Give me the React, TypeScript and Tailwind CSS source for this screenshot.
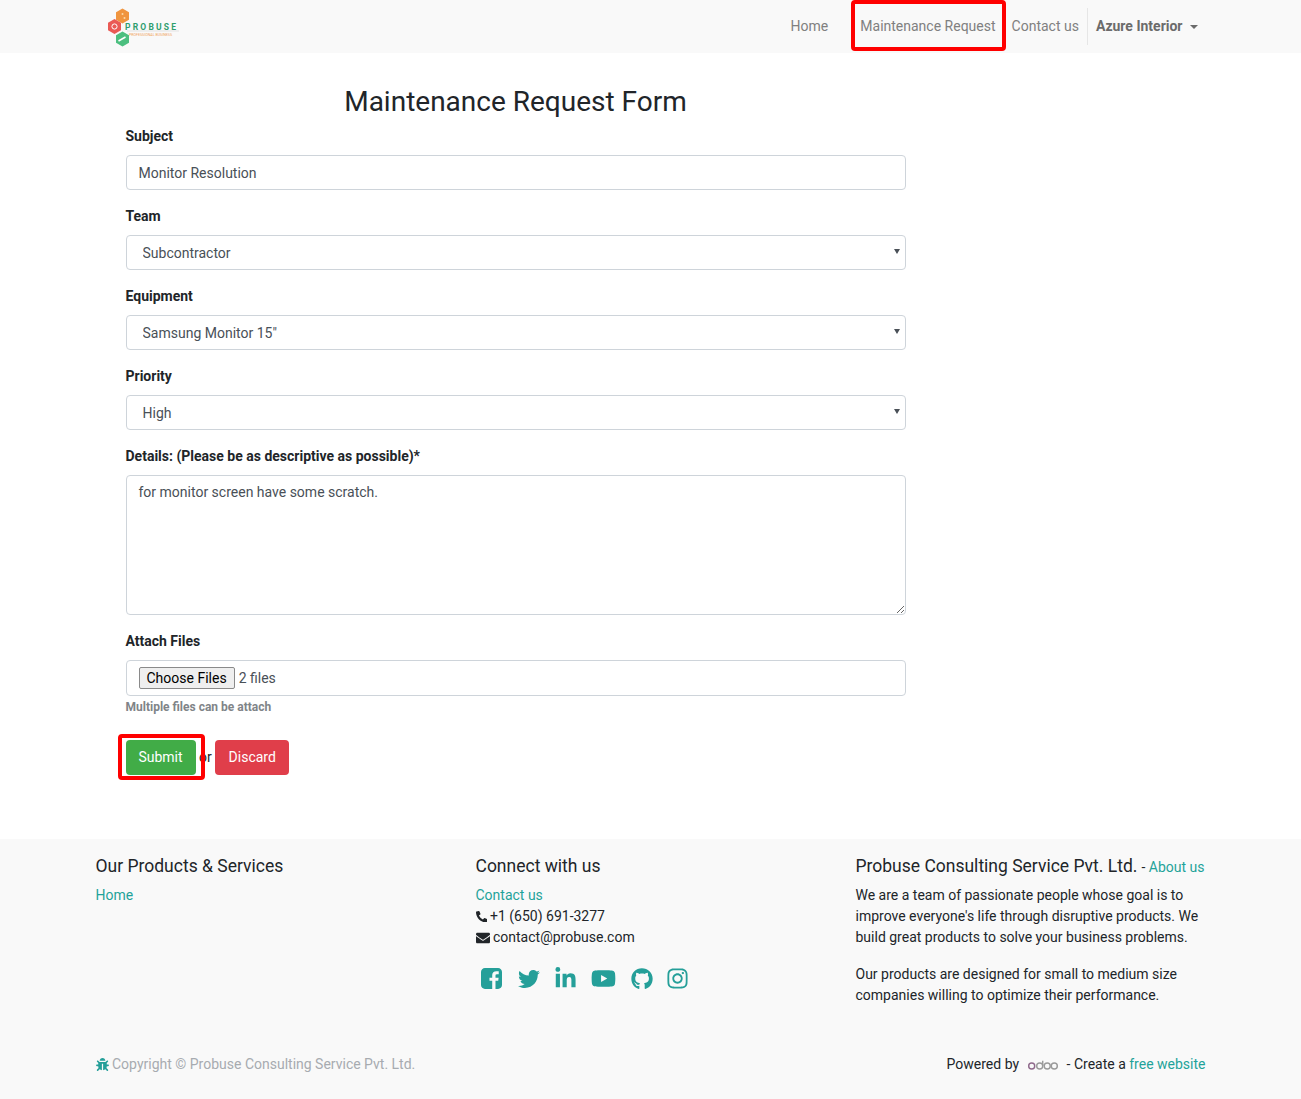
import { FaBug, FaEnvelope, FaGithub, FaInstagram, FaLinkedinIn, FaPhoneAlt, FaTwitter, FaYoutube } from "react-icons/fa";

function Logo() {
  return (
    <svg width="72" height="40" viewBox="0 0 72 40" className="block">
      <polygon points="14.5,1.5 21,5.2 21,12.8 14.5,16.5 8,12.8 8,5.2" fill="#f0953f" />
      <circle cx="14.5" cy="7" r="1" fill="#fbd9a8" />
      <circle cx="16.5" cy="11" r="1" fill="#fbd9a8" />
      <polygon points="6.5,12 13,15.7 13,23.3 6.5,27 0,23.3 0,15.7" fill="#ea5a55" />
      <circle cx="6.5" cy="19.5" r="2.6" fill="none" stroke="#fff" strokeWidth="1" />
      <polygon points="14.5,24.5 21,28.2 21,35.8 14.5,39.5 8,35.8 8,28.2" fill="#4cbf7f" />
      <path d="M10.5 34l7-4" stroke="#fff" strokeWidth="1.6" />
      <text x="17" y="22.5" fontFamily="Roboto" fontWeight="700" fontSize="8.5" letterSpacing="2.2" fill="#2f9e6e">PROBUSE</text>
      <path d="M19 24h52" stroke="#d8d8d8" strokeWidth="0.7" />
      <text x="21" y="28.5" fontFamily="Roboto" fontSize="3.6" fill="#f0a35e">PROFESSIONAL BUSINESS</text>
    </svg>
  );
}

function OdooLogo() {
  return (
    <svg width="32" height="12" viewBox="0 0 34 12" className="block">
      <circle cx="5" cy="7" r="3.2" fill="none" stroke="#8f6a8c" strokeWidth="1.5" />
      <circle cx="13.5" cy="7" r="3.2" fill="none" stroke="#9a9a9a" strokeWidth="1.5" />
      <path d="M16.7 1.5V7" stroke="#9a9a9a" strokeWidth="1.5" />
      <circle cx="21.5" cy="7" r="3.2" fill="none" stroke="#9a9a9a" strokeWidth="1.5" />
      <circle cx="29" cy="7" r="3.2" fill="none" stroke="#9a9a9a" strokeWidth="1.5" />
    </svg>
  );
}

// older font-awesome square, the f runs off the bottom edge
function FacebookSquare() {
  return (
    <svg width="21" height="21" viewBox="128 128 1536 1536" fill="currentColor" className="block">
      <path d="M1376 128q119 0 203.5 84.5t84.5 203.5v960q0 119-84.5 203.5t-203.5 84.5h-188v-595h199l30-232h-229v-148q0-56 23.5-84t91.5-28l122-1v-207q-63-9-178-9-136 0-217.5 80t-81.5 226v171h-200v232h200v595h-532q-119 0-203.5-84.5t-84.5-203.5v-960q0-119 84.5-203.5t203.5-84.5h960z" />
    </svg>
  );
}

const inputClass = "block w-full h-[35px] px-3 bg-white border border-[#ced4da] rounded text-sm text-[#495057] outline-none";

function SelectField({ label, value }: { label: string; value: string }) {
  return (
    <div className="mb-4">
      <label className="block mb-2 font-bold text-[#212529]">{label}</label>
      <div className="relative">
        <select defaultValue={value} className={`${inputClass} appearance-none pl-4`}>
          <option>{value}</option>
        </select>
        <span className="absolute right-[6px] top-[14px] border-x-[3px] border-x-transparent border-t-[5px] border-t-[#495057]" />
      </div>
    </div>
  );
}

export default function App() {
  return (
    <div className="min-h-[1099px] flex flex-col bg-white font-['Roboto',sans-serif] text-sm leading-[21px] text-[#212529]">
      {/* Navbar */}
      <header className="h-[53px] bg-[#f9f9f9]">
        <div className="w-[1140px] mx-auto pl-[27px] pr-[14.5px] h-full flex items-center justify-between">
          <Logo />
          <nav className="flex items-center text-[#808080]">
            <a className="px-2 mr-[16px]">Home</a>
            <a className="relative px-2">
              Maintenance Request
              <span className="absolute left-[-1px] right-[-2px] top-[-16px] bottom-[-14px] border-4 border-[#f00] rounded-sm" />
            </a>
            <a className="px-2">Contact us</a>
            <div className="flex items-center h-[37px] border-l border-[#e6e6e6] pl-2 pr-2 font-bold text-[#6b6b6b]">
              Azure Interior
              <span className="ml-[7.5px] border-x-[4.5px] border-x-transparent border-t-[4.5px] border-t-[#6b6b6b]" />
            </div>
          </nav>
        </div>
      </header>

      {/* Form */}
      <main className="w-[1140px] mx-auto flex-1 pl-[45px]">
        <form className="w-[780px]">
          <h3 className="pt-[32px] mb-[5px] h-[68px] text-center text-[28px] leading-[34px] text-[#212529]">Maintenance Request Form</h3>
          <div className="mb-4">
            <label className="block mb-2 font-bold">Subject</label>
            <input readOnly value="Monitor Resolution" className={inputClass} />
          </div>
          <SelectField label="Team" value="Subcontractor" />
          <SelectField label="Equipment" value={'Samsung Monitor 15"'} />
          <SelectField label="Priority" value="High" />
          <div className="mb-4">
            <label className="block mb-2 font-bold">Details: (Please be as descriptive as possible)*</label>
            <textarea
              readOnly
              value="for monitor screen have some scratch."
              className="block w-full h-[140px] px-3 py-[6px] bg-white border border-[#ced4da] rounded text-sm leading-[21px] text-[#495057] outline-none"
            />
          </div>
          <div className="mb-[24px]">
            <label className="block mb-2 font-bold">Attach Files</label>
            <div className="flex items-center h-9 px-3 border border-[#ced4da] rounded text-[#495057]">
              <span className="h-[22px] px-[7px] flex items-center bg-[#efefef] border border-[#8a8a8a] rounded-[2px] text-black">Choose Files</span>
              <span className="ml-1">2 files</span>
            </div>
            <small className="block mt-[2px] text-xs leading-[18px] font-bold text-[#808488]">Multiple files can be attach</small>
          </div>
          <div className="flex items-center">
            <button type="button" className="relative h-[35px] w-[70px] bg-[#41ac47] rounded text-white">
              Submit
              <span className="absolute left-[-8px] top-[-6px] right-[-9px] bottom-[-5px] border-4 border-[#f00] rounded-sm" />
            </button>
            <span className="ml-[3.5px] mr-[3.5px]">or</span>
            <button type="button" className="h-[35px] w-[74px] bg-[#e03e4a] rounded text-white">Discard</button>
          </div>
        </form>
      </main>

      {/* Footer */}
      <footer className="h-[260px] bg-[#f9f9f9]">
        <div className="w-[1140px] mx-auto px-[15px]">
          <div className="grid grid-cols-[380px_380px_1fr] h-[205px] pt-4">
            <div>
              <h5 className="mb-2 text-[17.5px] leading-[22px]">Our Products &amp; Services</h5>
              <a className="text-[#1fa39a]">Home</a>
            </div>
            <div>
              <h5 className="mb-2 text-[17.5px] leading-[22px]">Connect with us</h5>
              <a className="block text-[#1fa39a]">Contact us</a>
              <div className="flex items-center gap-[3px]"><FaPhoneAlt className="size-[11.5px]" />+1 (650) 691-3277</div>
              <div className="flex items-center gap-[3.5px]"><FaEnvelope className="size-[14px]" />contact@probuse.com</div>
              <div className="flex items-center h-[25px] mt-[18px] ml-[5px] text-[#259f99]">
                <FacebookSquare />
                <FaTwitter className="size-[22px] ml-[16px]" />
                <FaLinkedinIn className="size-[23px] ml-[14.5px]" />
                <FaYoutube className="size-[25px] ml-[13.5px]" />
                <FaGithub className="size-[22px] ml-[15px]" />
                <FaInstagram className="size-[23px] ml-[13px]" />
              </div>
            </div>
            <div>
              <h5 className="flex items-baseline gap-1 mb-2 h-[22px] leading-[22px] whitespace-nowrap">
                <span className="text-[17.5px]">Probuse Consulting Service Pvt. Ltd.</span>
                <span>- <a className="text-[#1fa39a]">About us</a></span>
              </h5>
              <p className="mb-4">We are a team of passionate people whose goal is to improve everyone's life through disruptive products. We build great products to solve your business problems.</p>
              <p>Our products are designed for small to medium size companies willing to optimize their performance.</p>
            </div>
          </div>
          <div className="flex items-center justify-between pt-[10px]">
            <div className="flex items-center gap-[3.5px] text-[#a7abb0]">
              <FaBug className="size-[13px] text-[#259f99]" />
              Copyright © Probuse Consulting Service Pvt. Ltd.
            </div>
            <div className="flex items-center">
              Powered by
              <span className="ml-2 mr-[7.5px]"><OdooLogo /></span>
              - Create a&nbsp;<a className="text-[#1fa39a]">free website</a>
            </div>
          </div>
        </div>
      </footer>
    </div>
  );
}
